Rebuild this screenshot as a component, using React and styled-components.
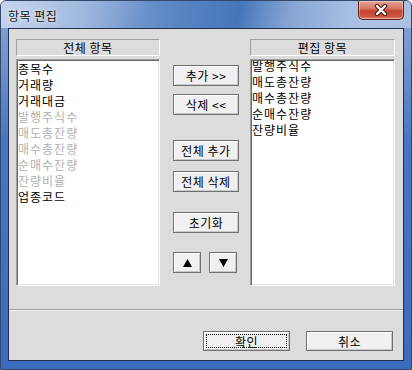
import React from 'react';
import styled, { createGlobalStyle } from 'styled-components';

const GlobalStyle = createGlobalStyle`
  html, body {
    margin: 0;
    padding: 0;
    background: #ffffff;
  }
  body {
    font-family: "Noto Sans CJK KR", "Noto Sans", sans-serif;
    font-size: 12px;
  }
`;

const allItems = [
  { name: '종목수', used: false },
  { name: '거래량', used: false },
  { name: '거래대금', used: false },
  { name: '발행주식수', used: true },
  { name: '매도총잔량', used: true },
  { name: '매수총잔량', used: true },
  { name: '순매수잔량', used: true },
  { name: '잔량비율', used: true },
  { name: '업종코드', used: false },
];

const editItems = ['발행주식수', '매도총잔량', '매수총잔량', '순매수잔량', '잔량비율'];

const Window = styled.div`
  box-sizing: border-box;
  width: 412px;
  height: 370px;
  display: flex;
  flex-direction: column;
  padding: 0 7px 8px 7px;
  border: 1px solid #33476a;
  border-radius: 6px 6px 0 0;
  background: linear-gradient(180deg, #8aa8d6 0px, #6f93cc 60px, #4676c2 140px, #3b6bbd 100%);
  overflow: hidden;
`;

const TitleBar = styled.div`
  display: flex;
  align-items: flex-start;
  justify-content: space-between;
  height: 27px;
  margin: 0 -7px;
  padding: 0 0 0 7px;
  background:
    linear-gradient(115deg, rgba(255,255,255,0.35) 0%, rgba(255,255,255,0.15) 22%, rgba(255,255,255,0) 35%, rgba(255,255,255,0) 58%, rgba(255,255,255,0.2) 70%, rgba(255,255,255,0.3) 100%),
    linear-gradient(90deg, #a5bee2 0%, #8dabd8 20%, #5b86c4 42%, #4676ba 58%, #6b92cb 72%, #90aedb 88%, #86a6d6 100%);
`;

const Title = styled.span`
  margin-top: 6px;
  font-size: 12px;
  color: #111;
  text-shadow: 0 0 6px rgba(255,255,255,0.9), 0 0 2px rgba(255,255,255,0.8);
  letter-spacing: 0.5px;
`;

const CloseButton = styled.div`
  box-sizing: border-box;
  width: 46px;
  height: 19px;
  margin-right: 7px;
  display: flex;
  align-items: center;
  justify-content: center;
  border: 1px solid #5b2119;
  border-top: none;
  border-radius: 0 0 5px 5px;
  background: linear-gradient(180deg, #e3a392 0%, #d87a66 40%, #c24431 55%, #cb5440 85%, #e08a70 100%);
  box-shadow: inset 0 0 0 1px rgba(255,255,255,0.35);
`;

const Client = styled.div`
  flex: 1;
  display: flex;
  flex-direction: column;
  border: 1px solid #1f2f4c;
  background: #dcdcdc;
`;

const Main = styled.div`
  display: flex;
  align-items: flex-start;
  padding: 10px 8px 0 7px;
`;

const Column = styled.div`
  display: flex;
  flex-direction: column;
  width: ${p => p.$width}px;
`;

const Header = styled.div`
  box-sizing: border-box;
  height: 17px;
  display: flex;
  align-items: center;
  justify-content: center;
  border-top: 1px solid #a0a0a0;
  border-left: 1px solid #a0a0a0;
  border-right: 1px solid #ffffff;
  border-bottom: 1px solid #ffffff;
  color: #000;
  font-size: 12px;
  letter-spacing: 0.5px;
`;

const ListBox = styled.div`
  box-sizing: border-box;
  height: 227px;
  margin-top: 3px;
  overflow: hidden;
  background: #ffffff;
  border-top: 1px solid #a0a0a0;
  border-left: 1px solid #a0a0a0;
  border-right: 1px solid #ffffff;
  border-bottom: 1px solid #ffffff;
  box-shadow: inset 1px 1px 0 #696969, inset -1px -1px 0 #e3e3e3;
  padding: 1px 1px;
`;

const ListInner = styled.div`
  margin-top: ${p => p.$shift || 0}px;
`;

const Item = styled.div`
  height: 16px;
  line-height: 16px;
  font-size: 12px;
  color: ${p => (p.$dim ? '#b0b0b0' : '#000')};
  letter-spacing: 1px;
  white-space: nowrap;
`;

const Middle = styled.div`
  display: flex;
  flex-direction: column;
  width: 66px;
  margin: 0 11px 0 13px;
`;

const Button = styled.button`
  box-sizing: border-box;
  width: ${p => p.$width || 66}px;
  height: ${p => p.$height || 21}px;
  margin-top: ${p => p.$gap || 0}px;
  padding: 0;
  display: flex;
  align-items: center;
  justify-content: center;
  font-family: "Noto Sans CJK KR", "Noto Sans", sans-serif;
  font-size: 12px;
  color: #000;
  letter-spacing: 0.5px;
  background: #f0f0f0;
  border: 1px solid #707070;
  box-shadow: inset 1px 1px 0 #ffffff, inset -1px -1px 0 #c8c8c8;
  border-radius: 0;
  outline: ${p => (p.$focus ? '1px dotted #000' : 'none')};
  outline-offset: -4px;
`;

const ArrowRow = styled.div`
  display: flex;
  gap: 8px;
  margin-top: 19px;
`;

const Footer = styled.div`
  margin-top: 23px;
  border-top: 1px solid #a0a0a0;
  box-shadow: inset 0 1px 0 #f4f4f4;
  display: flex;
  justify-content: flex-end;
  gap: 16px;
  padding: 21px 10px 0 0;
`;

const Triangle = ({ up }) => (
  <svg width="9" height="8" viewBox="0 0 9 8">
    <polygon points={up ? '4.5,0 9,8 0,8' : '0,0 9,0 4.5,8'} fill="#000" />
  </svg>
);

const CloseIcon = () => (
  <svg width="14" height="12" viewBox="0 0 14 12">
    <path d="M3 2 L11 10 M11 2 L3 10" stroke="#4a1a14" strokeWidth="4.4" strokeLinecap="round" />
    <path d="M3 2 L11 10 M11 2 L3 10" stroke="#ffffff" strokeWidth="2.4" strokeLinecap="round" />
  </svg>
);

export default function App() {
  return (
    <>
      <GlobalStyle />
      <Window>
        <TitleBar>
          <Title>항목 편집</Title>
          <CloseButton><CloseIcon /></CloseButton>
        </TitleBar>
        <Client>
          <Main>
            <Column $width={145}>
              <Header>전체 항목</Header>
              <ListBox>
                <ListInner>
                  {allItems.map(item => (
                    <Item key={item.name} $dim={item.used}>{item.name}</Item>
                  ))}
                </ListInner>
              </ListBox>
            </Column>
            <Middle>
              <Button $gap={26}>추가 &gt;&gt;</Button>
              <Button $gap={8}>삭제 &lt;&lt;</Button>
              <Button $gap={25}>전체 추가</Button>
              <Button $gap={10}>전체 삭제</Button>
              <Button $gap={20}>초기화</Button>
              <ArrowRow>
                <Button $width={28}><Triangle up /></Button>
                <Button $width={28}><Triangle /></Button>
              </ArrowRow>
            </Middle>
            <Column $width={146}>
              <Header>편집 항목</Header>
              <ListBox>
                <ListInner $shift={-3}>
                  {editItems.map(name => (
                    <Item key={name}>{name}</Item>
                  ))}
                </ListInner>
              </ListBox>
            </Column>
          </Main>
          <Footer>
            <Button $width={87} $height={20} $focus>확인</Button>
            <Button $width={87} $height={20}>취소</Button>
          </Footer>
        </Client>
      </Window>
    </>
  );
}
